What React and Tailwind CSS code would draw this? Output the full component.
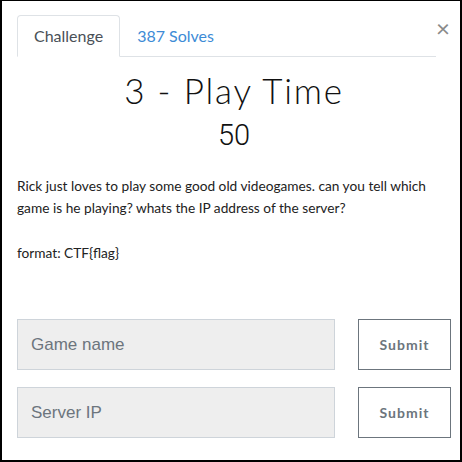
import React from 'react';

const App = () => {
  const fields = ['Game name', 'Server IP'];

  return (
    <div
      className="w-[462px] h-[462px] bg-white border-l-2 border-t border-r-2 border-b-2 border-black pt-[14px] pl-[15px] pr-[9px]"
      style={{ fontFamily: 'Lato, "Open Sans", sans-serif' }}
    >
      {/* Tabs */}
      <div className="flex items-start">
        <div className="flex w-[420px] border-b border-[#dee2e6] h-[42px]">
          <div className="h-[42px] px-4 flex items-center border border-[#dee2e6] border-b-white rounded-t-[4px] bg-white text-[16px] text-[#495057] mb-[-1px]">
            Challenge
          </div>
          <div className="h-[42px] px-[17px] flex items-center text-[16px] text-[#3d8bd6]">
            387 Solves
          </div>
        </div>
        <button className="ml-auto mt-[1px] mr-[1px] text-[24px] leading-none text-[#8a8a8a] font-normal">×</button>
      </div>

      {/* Title */}
      <div className="text-center mt-[13px]">
        <h2 className="text-[35px] font-light text-[#111] leading-[40px] tracking-[1.8px]">3 - Play Time</h2>
        <h3
          className="text-[29px] font-light text-[#111] leading-[34px] mt-[8px]"
          style={{ fontFamily: 'Roboto, sans-serif' }}
        >
          50
        </h3>
      </div>

      {/* Description */}
      <div className="mt-[23px] text-[13.7px] text-[#222] leading-[22px]">
        <p>Rick just loves to play some good old videogames. can you tell which game is he playing? whats the IP address of the server?</p>
        <p className="mt-[23px]">format: CTF{'{'}flag{'}'}</p>
      </div>

      {/* Inputs */}
      <div className="mt-[55px] flex flex-col gap-[17px]">
        {fields.map((f) => (
          <div key={f} className="flex items-center">
            <input
              placeholder={f}
              className="w-[318px] h-[51px] bg-[#eeeeee] border border-[#ced4da] px-[13px] text-[17px] placeholder:text-[#6c757d] outline-none"
              style={{ fontFamily: '"Liberation Sans", Arial, sans-serif' }}
            />
            <button className="ml-[23px] w-[93px] h-[51px] border border-[#6c757d] text-[14px] font-bold text-[#6c757d] tracking-[1px]">
              Submit
            </button>
          </div>
        ))}
      </div>
    </div>
  );
};

export default App;
